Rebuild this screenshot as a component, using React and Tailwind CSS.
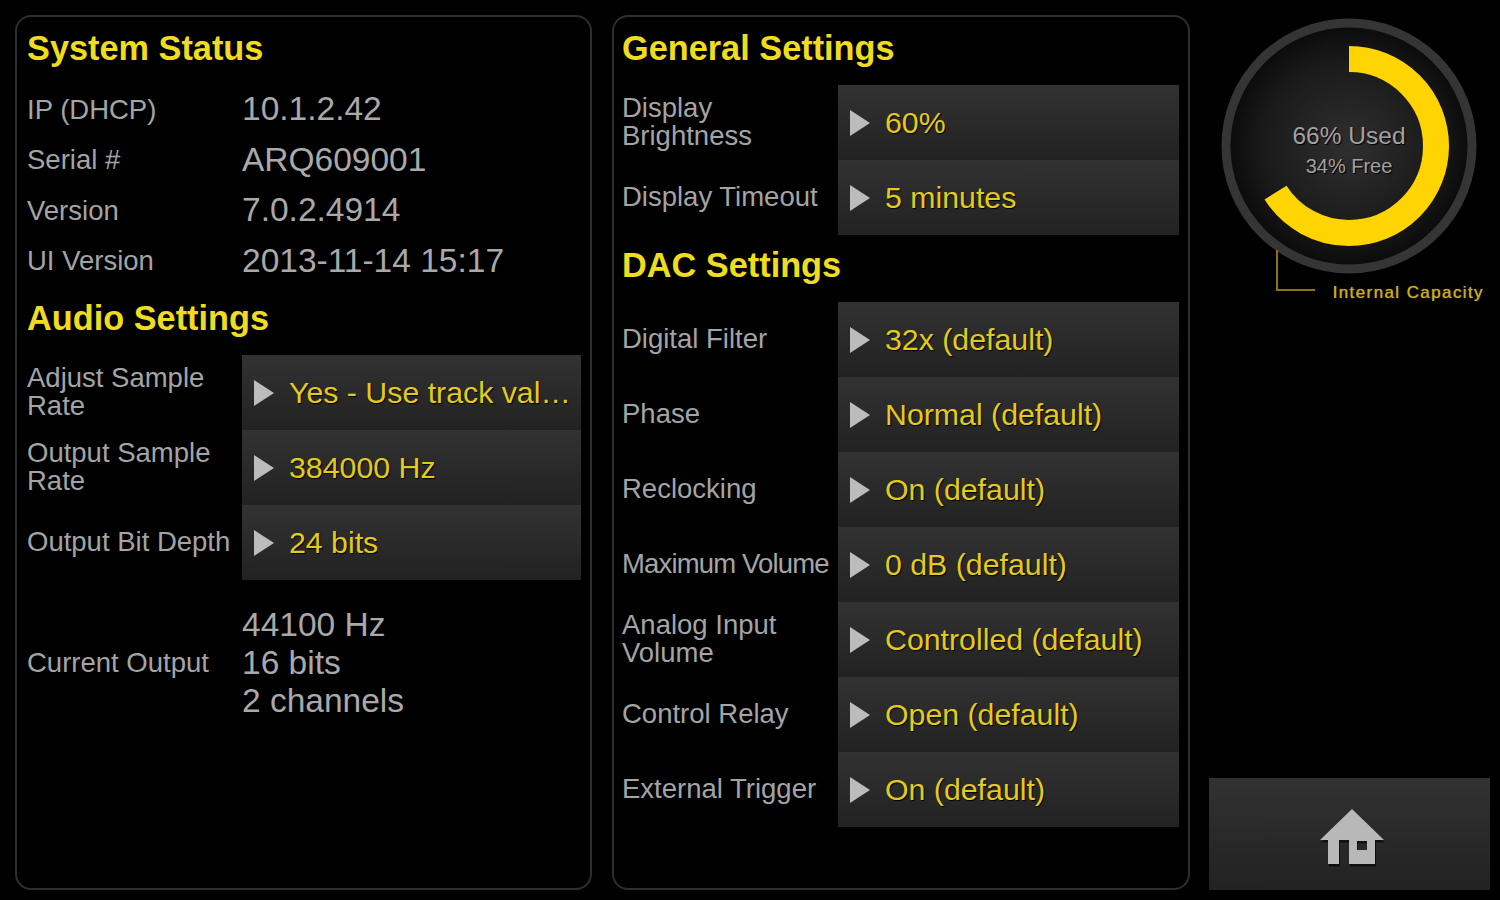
const statusRows = [
  ["IP (DHCP)", "10.1.2.42"],
  ["Serial #", "ARQ609001"],
  ["Version", "7.0.2.4914"],
  ["UI Version", "2013-11-14 15:17"],
];

const audioRows = [
  ["Adjust Sample Rate", "Yes - Use track val…"],
  ["Output Sample Rate", "384000 Hz"],
  ["Output Bit Depth", "24 bits"],
];

const generalRows = [
  ["Display Brightness", "60%"],
  ["Display Timeout", "5 minutes"],
];

const dacRows = [
  ["Digital Filter", "32x (default)"],
  ["Phase", "Normal (default)"],
  ["Reclocking", "On (default)"],
  ["Maximum Volume", "0 dB (default)", "whitespace-nowrap tracking-[-0.85px]"],
  ["Analog Input Volume", "Controlled (default)"],
  ["Control Relay", "Open (default)"],
  ["External Trigger", "On (default)"],
];

function Heading({ children, className = "" }) {
  return (
    <h2 className={`text-[34.3px] leading-[40px] font-bold text-[#f0dc1e] ${className}`}>
      {children}
    </h2>
  );
}

function SelectRow({ label, value, labelWidth, labelClass = "" }) {
  return (
    <div className="flex h-[75px] items-center">
      <div className={`${labelWidth} ${labelClass} shrink-0 pb-[2px] pr-1 text-[27.5px] leading-[28px] text-[#a4a4a4]`}>
        {label}
      </div>
      <button className="flex h-full min-w-0 flex-1 items-center bg-gradient-to-b from-[#323232] to-[#222222] pl-3 pr-2 text-left">
        <svg width="20" height="26" viewBox="0 0 20 26" className="shrink-0">
          <path d="M0 0 L20 13 L0 26 Z" fill="#bcbcbc" />
        </svg>
        <span className="ml-[15px] truncate text-[30.3px] text-[#e3cb1e] [text-shadow:1px_1px_1px_#000]">
          {value}
        </span>
      </button>
    </div>
  );
}

function Gauge() {
  return (
    <div className="relative ml-3 h-[256px] w-[256px]">
      <svg width="256" height="256" viewBox="0 0 256 256">
        <defs>
          <radialGradient id="gaugeFill" cx="50%" cy="50%" r="50%">
            <stop offset="0%" stopColor="#2f2f2f" />
            <stop offset="70%" stopColor="#1a1a1a" />
            <stop offset="100%" stopColor="#0a0a0a" />
          </radialGradient>
        </defs>
        <circle cx="128" cy="128" r="123" fill="url(#gaugeFill)" stroke="#353535" strokeWidth="9" />
        <circle
          cx="128"
          cy="128"
          r="87"
          fill="none"
          stroke="#ffd400"
          strokeWidth="26"
          pathLength="100"
          strokeDasharray="66 34"
          transform="rotate(-90 128 128)"
        />
      </svg>
      <div className="absolute inset-0 flex flex-col items-center pt-[103px] text-[#a2a2a2] [text-shadow:1px_1px_1px_#000]">
        <span className="text-[24.5px] leading-[30px]">66% Used</span>
        <span className="text-[20px] leading-[30px]">34% Free</span>
      </div>
      <div className="absolute left-[55px] top-[232px] h-[41px] w-[39px] border-b-2 border-l-2 border-[#8a7414]" />
    </div>
  );
}

function HomeIcon() {
  return (
    <svg width="66" height="58" viewBox="0 0 66 58">
      <path
        d="M33 1 L65 32 L56 32 L56 56 L30 56 L30 32 L20 32 L20 56 L9 56 L9 32 L1 32 Z M38 33 L38 42 L48 42 L48 33 Z"
        fill="#000"
        fillRule="evenodd"
        opacity="0.6"
        transform="translate(1 1.5)"
      />
      <path
        d="M33 0 L65 31 L56 31 L56 55 L30 55 L30 31 L20 31 L20 55 L9 55 L9 31 L1 31 Z M38 32 L38 41 L48 41 L48 32 Z"
        fill="#b8b8b8"
        fillRule="evenodd"
      />
    </svg>
  );
}

export default function App() {
  return (
    <div className="flex h-[900px] w-[1500px] bg-black pb-[10px] pl-[15px] pt-[15px] font-['Liberation_Sans',Arial,sans-serif]">

      {/* LEFT PANEL */}
      <section className="h-[875px] w-[577px] rounded-2xl border-2 border-[#2e2e2e] pl-[10px] pr-[9px] pt-[11px]">
        <Heading>System Status</Heading>

        <div className="mt-4">
          {statusRows.map(([label, value]) => (
            <div key={label} className="flex h-[50.5px] items-center">
              <div className="w-[215px] shrink-0 text-[27.5px] text-[#a4a4a4]">{label}</div>
              <div className="text-[33.5px] text-[#a9a9a9]">{value}</div>
            </div>
          ))}
        </div>

        <Heading className="mt-3">Audio Settings</Heading>

        <div className="mt-[17px]">
          {audioRows.map(([label, value]) => (
            <SelectRow key={label} label={label} value={value} labelWidth="w-[215px]" />
          ))}
        </div>

        <div className="mt-[26px] flex items-center">
          <div className="w-[215px] shrink-0 text-[27.5px] text-[#a4a4a4]">Current Output</div>
          <div className="text-[33.5px] leading-[38px] text-[#a9a9a9]">
            <div>44100 Hz</div>
            <div>16 bits</div>
            <div>2 channels</div>
          </div>
        </div>
      </section>

      {/* MIDDLE PANEL */}
      <section className="ml-5 h-[875px] w-[578px] rounded-2xl border-2 border-[#2e2e2e] pl-2 pr-[9px] pt-[11px]">
        <Heading>General Settings</Heading>

        <div className="mt-[17px]">
          {generalRows.map(([label, value]) => (
            <SelectRow key={label} label={label} value={value} labelWidth="w-[216px]" />
          ))}
        </div>

        <Heading className="mt-[10px]">DAC Settings</Heading>

        <div className="mt-[17px]">
          {dacRows.map(([label, value, labelClass]) => (
            <SelectRow key={label} label={label} value={value} labelWidth="w-[216px]" labelClass={labelClass} />
          ))}
        </div>
      </section>

      {/* RIGHT COLUMN */}
      <aside className="ml-[19px] flex h-[875px] w-[281px] flex-col pt-[3px]">
        <Gauge />

        <div className="mt-[9px] flex justify-end pr-[6px] text-[17px] leading-[20px] tracking-[1.4px] text-[#c8ad1c] [text-shadow:0_0_1px_#c8ad1c]">
          Internal Capacity
        </div>

        <button className="mt-auto flex h-[112px] items-center justify-center bg-gradient-to-b from-[#323232] to-[#222222] pl-[4px] pt-[7px]">
          <HomeIcon />
        </button>
      </aside>

    </div>
  );
}
